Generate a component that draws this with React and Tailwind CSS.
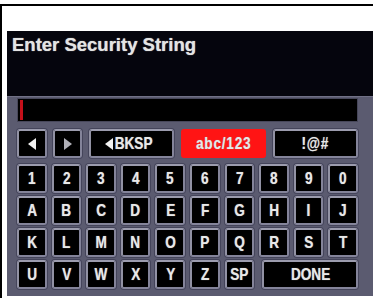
import React from "react";

const Key = ({ children, className = "" }) => (
  <div
    className={`h-[29px] flex items-center justify-center rounded-[3px] bg-black border-2 border-[#84849a] border-t-[#9c9cae] border-l-[#9292a4] text-[#e8e8e8] font-bold text-[17px] leading-none font-['Liberation_Sans',sans-serif] shadow-[0_0_0_1px_#44445a] [text-shadow:0_0_1px_#999] ${className}`}
  >
    {children}
  </div>
);

const Label = ({ children, className = "" }) => (
  <span className={`inline-block scale-x-[0.8] whitespace-nowrap ${className}`}>{children}</span>
);

const LeftTri = ({ color = "#f2f2f2", w = 8, h = 12 }) => (
  <svg width={w} height={h} viewBox="0 0 8 12" preserveAspectRatio="none">
    <polygon points="8,0 8,12 0,6" fill={color} />
  </svg>
);
const RightTri = ({ color = "#f2f2f2" }) => (
  <svg width="8" height="12" viewBox="0 0 8 12">
    <polygon points="0,0 0,12 8,6" fill={color} />
  </svg>
);

export default function App() {
  const rows = [
    ["1", "2", "3", "4", "5", "6", "7", "8", "9", "0"],
    ["A", "B", "C", "D", "E", "F", "G", "H", "I", "J"],
    ["K", "L", "M", "N", "O", "P", "Q", "R", "S", "T"],
  ];
  return (
    <div className="w-[373px] h-[304px] bg-white overflow-hidden">
      <div className="mt-[4px] h-[294px] border-l-2 border-t-2 border-black pl-[5px] pt-[25px]">
        <div className="h-[265px] flex flex-col">
          <div className="h-[65px] bg-[#05050d] pl-[5px] pt-[3px]">
            <div className="text-[18.5px] font-bold text-[#e4e4e4] font-['Liberation_Sans',sans-serif] leading-[22px] [text-shadow:0_0_1px_#bbb]">
              Enter Security String
            </div>
          </div>
          <div className="flex-1 bg-[#5b5b70] border-t border-[#717186] pl-[10px] pr-[15px] pt-[1px] flex flex-col">
            <div className="h-[24px] bg-black border border-[#47475a] flex items-center pl-[2px]">
              <div className="w-[3px] h-[20px] bg-[#c4101a]" />
            </div>
            <div className="mt-[7px] flex gap-[6px]">
              <Key className="w-[30px]">
                <LeftTri />
              </Key>
              <Key className="w-[29px]">
                <RightTri color="#b0b0b8" />
              </Key>
              <div className="flex-1 flex gap-[7px] ml-[1px]">
                <Key className="flex-1">
                  <LeftTri w={8} h={12} />
                  <Label className="-ml-[3px]">BKSP</Label>
                </Key>
                <Key className="flex-1 !bg-[#ff1414] !border-[#ff1414] !shadow-none">
                  <Label className="tracking-[1px]">abc/123</Label>
                </Key>
                <Key className="flex-1">
                  <Label className="tracking-[1px]">!@#</Label>
                </Key>
              </div>
            </div>
            <div className="mt-[6px] flex flex-col gap-[3px]">
              {rows.map((r, i) => (
                <div key={i} className="grid grid-cols-10 gap-x-[5px]">
                  {r.map((k) => (
                    <Key key={k}>
                      <Label>{k}</Label>
                    </Key>
                  ))}
                </div>
              ))}
              <div className="grid grid-cols-10 gap-x-[5px]">
                {["U", "V", "W", "X", "Y", "Z", "SP"].map((k) => (
                  <Key key={k}>
                    <Label>{k}</Label>
                  </Key>
                ))}
                <Key className="col-span-3 ml-[3px]">
                  <Label>DONE</Label>
                </Key>
              </div>
            </div>
          </div>
        </div>
      </div>
    </div>
  );
}
